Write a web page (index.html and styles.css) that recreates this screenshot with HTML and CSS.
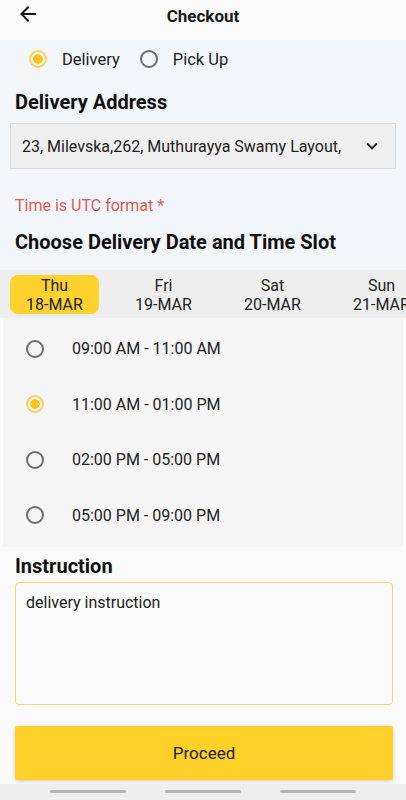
FILE: index.html
```html
<!DOCTYPE html>
<html lang="en">
<head>
  <meta charset="UTF-8">
  <meta name="viewport" content="width=device-width, initial-scale=1">
  <title>Checkout</title>
  <link rel="stylesheet" href="styles.css">
</head>
<body>
  <div class="screen">
    <!-- Top bar -->
    <header class="topbar">
      <span class="back">
        <svg width="24" height="24" viewBox="0 0 24 24"><path d="M20 11H7.83l5.59-5.59L12 4l-8 8 8 8 1.41-1.41L7.83 13H20v-2z" fill="#111"/></svg>
      </span>
      <h1>Checkout</h1>
    </header>

    <main class="content">
      <!-- Delivery / pick up -->
      <div class="mode">
        <label class="radio-row"><span class="radio checked"></span>Delivery</label>
        <label class="radio-row"><span class="radio"></span>Pick Up</label>
      </div>

      <h2 class="section-title">Delivery Address</h2>
      <div class="select">
        <span class="select-text">23, Milevska,262, Muthurayya Swamy Layout,</span>
        <svg width="22" height="22" viewBox="0 0 24 24"><path d="M7.41 8.59 12 13.17l4.59-4.58L18 10l-6 6-6-6z" fill="#222"/></svg>
      </div>

      <p class="note">Time is UTC format *</p>
      <h2 class="section-title">Choose Delivery Date and Time Slot</h2>
    </main>

    <!-- Dates -->
    <div class="dates">
      <div class="date active"><span>Thu</span><span>18-MAR</span></div>
      <div class="date"><span>Fri</span><span>19-MAR</span></div>
      <div class="date"><span>Sat</span><span>20-MAR</span></div>
      <div class="date"><span>Sun</span><span>21-MAR</span></div>
    </div>

    <!-- Time slots -->
    <ul class="slots">
      <li><span class="radio"></span>09:00 AM - 11:00 AM</li>
      <li><span class="radio checked"></span>11:00 AM - 01:00 PM</li>
      <li><span class="radio"></span>02:00 PM - 05:00 PM</li>
      <li><span class="radio"></span>05:00 PM - 09:00 PM</li>
    </ul>

    <section class="instruction">
      <h2 class="section-title">Instruction</h2>
      <div class="textarea">delivery instruction</div>
      <button class="proceed">Proceed</button>
    </section>

    <!-- Bottom system bar -->
    <footer class="navbar">
      <span></span><span></span><span></span>
    </footer>
  </div>
</body>
</html>
```

FILE: styles.css
```css
/* Reset */
* {
  box-sizing: border-box;
  margin: 0;
  padding: 0;
}
body {
  font-family: Roboto, "Noto Sans", sans-serif;
  background: #fafafa;
  color: #1a1a1a;
  width: 406px;
  height: 800px;
  overflow: hidden;
}
.screen {
  display: flex;
  flex-direction: column;
  height: 800px;
}
/* Top bar */
.topbar {
  height: 40px;
  background: #fafafa;
  display: flex;
  align-items: center;
  justify-content: center;
  position: relative;
}
.topbar h1 {
  font-size: 17px;
  font-weight: 700;
  margin-top: -8px;
}
.back {
  position: absolute;
  left: 16px;
  top: 2px;
}
/* Main */
.content {
  background: #f3f6f9;
  padding: 0 15px;
}
.mode {
  display: flex;
  align-items: center;
  gap: 20px;
  padding-left: 14px;
  height: 38px;
}
.radio-row {
  display: flex;
  align-items: center;
  gap: 15px;
  font-size: 16.5px;
  color: #222;
}
.radio {
  width: 18px;
  height: 18px;
  border: 2px solid #6b6b6b;
  border-radius: 50%;
  display: inline-block;
  flex-shrink: 0;
}
.radio.checked {
  border-color: #f6d35a;
  background: radial-gradient(circle, #fcc419 0 4.5px, transparent 5px);
}
.section-title {
  font-size: 20px;
  font-weight: 700;
  color: #111;
  margin-top: 12px;
}
.select {
  margin: 9px -5px 0;
  height: 46px;
  background: #efefef;
  border: 1px solid #dcdcdc;
  display: flex;
  align-items: center;
  justify-content: space-between;
  padding: 0 12px 0 11px;
}
.select-text {
  font-size: 16px;
  color: #222;
  white-space: nowrap;
  overflow: hidden;
}
.note {
  color: #dd5a57;
  font-size: 16px;
  margin-top: 27px;
}
.content .section-title:last-child {
  margin-top: 15px;
  padding-bottom: 16px;
}
/* Dates */
.dates {
  background: #eeeeee;
  display: flex;
  height: 48px;
  align-items: center;
  padding-left: 10px;
  gap: 20px;
  white-space: nowrap;
}
.date {
  width: 89px;
  height: 39px;
  flex-shrink: 0;
  display: flex;
  flex-direction: column;
  align-items: center;
  justify-content: center;
  font-size: 16px;
  line-height: 19px;
  padding-top: 2px;
  color: #222;
  border-radius: 8px;
}
.date.active {
  background: #fdd12e;
}
/* Slots */
.slots {
  list-style: none;
  background: #f5f5f5;
  margin: 0 3px;
  padding: 3px 0 4px;
}
.slots li {
  display: flex;
  align-items: center;
  gap: 28px;
  height: 55.5px;
  padding-left: 23px;
  font-size: 16px;
  color: #222;
}
/* Instruction */
.instruction {
  padding: 7px 13px 0 15px;
  background: #fafafa;
  flex: 1;
}
.instruction .section-title {
  margin-top: 0;
}
.textarea {
  margin-top: 4px;
  height: 123px;
  border: 1px solid #f3d97a;
  border-radius: 4px;
  background: #fafafa;
  padding: 10px 10px;
  font-size: 16px;
  color: #222;
}
.proceed {
  display: block;
  width: 100%;
  margin-top: 21px;
  height: 54px;
  border: none;
  background: #fdd12a;
  color: #222;
  font-family: inherit;
  font-size: 17px;
  box-shadow: 0 1px 4px rgba(0, 0, 0, 0.2);
  border-radius: 2px;
}
/* System nav */
.navbar {
  height: 16px;
  background: #eeeeee;
  display: flex;
  justify-content: center;
  gap: 39px;
  padding-top: 6px;
}
.navbar span {
  width: 76px;
  height: 3px;
  border-radius: 2px;
  background: #b5b5b5;
}
```
